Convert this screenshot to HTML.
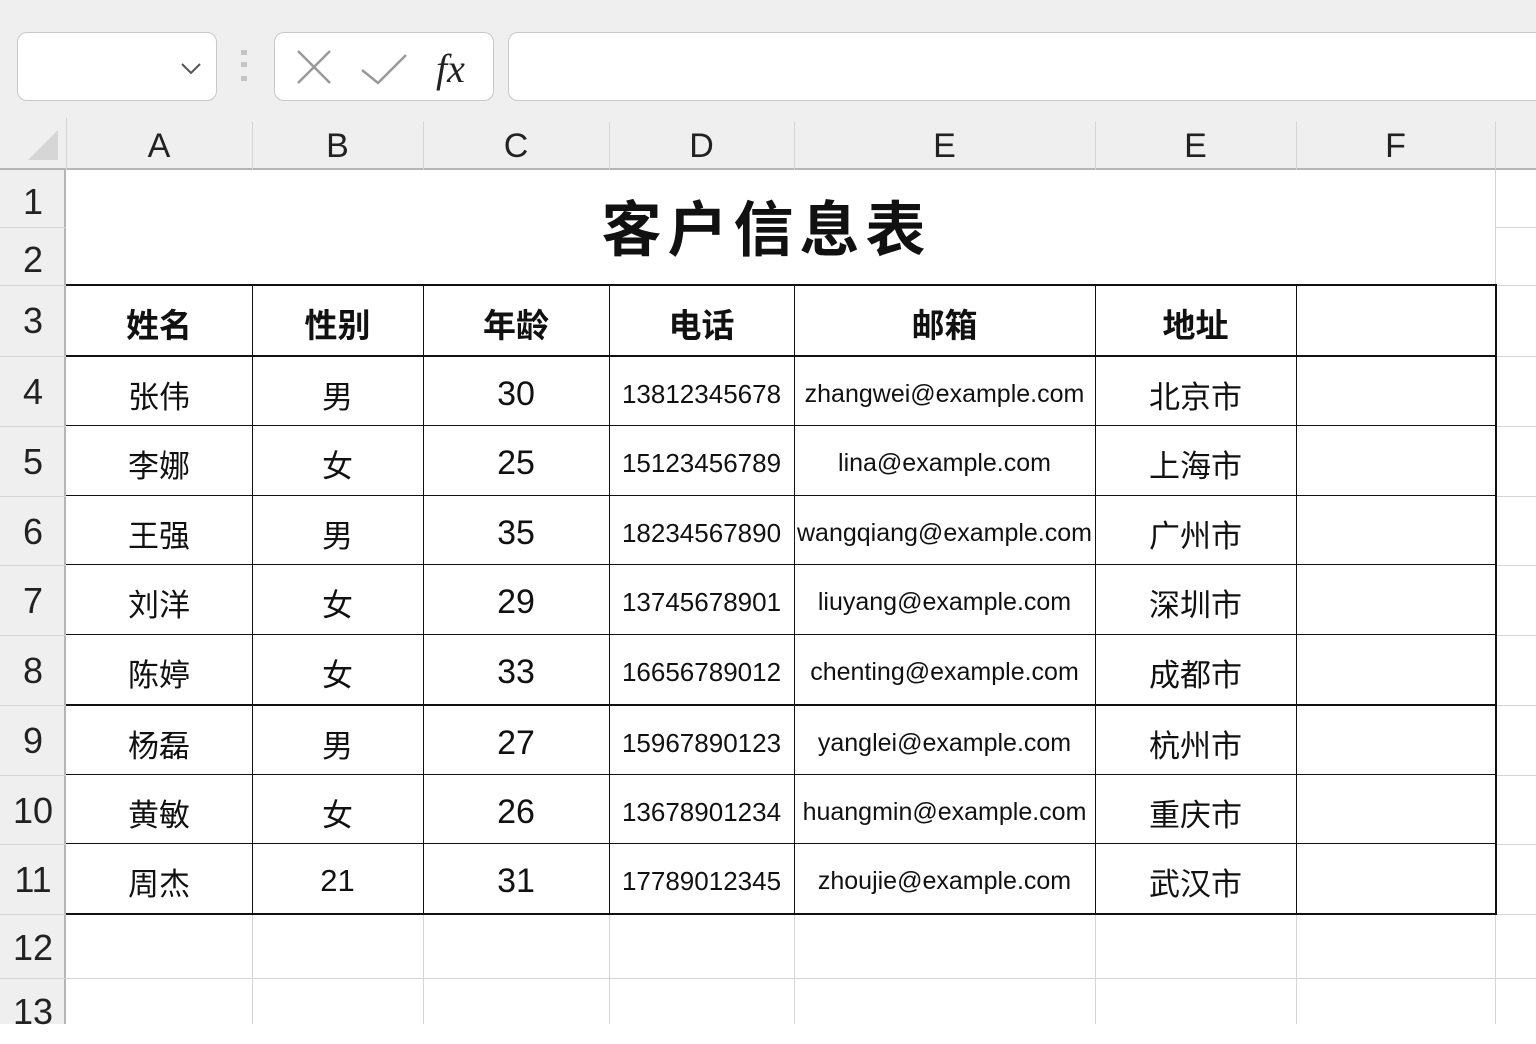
<!DOCTYPE html>
<html><head><meta charset="utf-8"><style>
*{margin:0;padding:0;box-sizing:border-box}
body{width:1536px;height:1024px;overflow:hidden;background:#fff;font-family:"Liberation Sans","Noto Sans CJK SC",sans-serif;position:relative;color:#1a1a1a}
.a{position:absolute}
.c{position:absolute;display:flex;align-items:center;justify-content:center;white-space:nowrap;overflow:hidden}
#rows .c{padding-top:5px}
.gl{position:absolute;background:#d4d4d4}
.bl{position:absolute;background:#111}
</style></head><body>
<div class="a" style="left:0;top:0;width:1536px;height:118px;background:#efefef"></div>
<div class="a" style="left:17px;top:32px;width:200px;height:69px;background:#fff;border:1.5px solid #c8c8c8;border-radius:10px"></div>
<svg class="a" style="left:178px;top:58px" width="26" height="20"><path d="M4 6 L13 15 L22 6" stroke="#555" stroke-width="2" fill="none"/></svg>
<div class="a" style="left:241px;top:50px;width:6px;height:5px;background:#c4c4c4"></div>
<div class="a" style="left:241px;top:62px;width:6px;height:5px;background:#c4c4c4"></div>
<div class="a" style="left:241px;top:76px;width:6px;height:5px;background:#c4c4c4"></div>
<div class="a" style="left:274px;top:32px;width:220px;height:69px;background:#fff;border:1.5px solid #c8c8c8;border-radius:10px"></div>
<svg class="a" style="left:290px;top:45px" width="200" height="50"><path d="M8 6 L40 38 M40 6 L8 38" stroke="#999" stroke-width="2.5"/><path d="M72 25 L88 38 L116 10" stroke="#999" stroke-width="2.5" fill="none"/>
<text x="146" y="37" font-family="Liberation Serif,serif" font-style="italic" font-size="40" fill="#222">fx</text></svg>
<div class="a" style="left:508px;top:32px;width:1040px;height:69px;background:#fff;border:1.5px solid #c8c8c8;border-radius:10px"></div>
<div class="a" style="left:0;top:118px;width:1536px;height:52px;background:#efefef;border-bottom:2px solid #b5b5b5"></div>
<svg class="a" style="left:26px;top:128px" width="34" height="34"><path d="M32 2 L32 32 L2 32 Z" fill="#d6d6d6"/></svg>
<div class="a" style="left:0;top:170px;width:66px;height:854px;background:#efefef;border-right:2px solid #b5b5b5"></div>
<div style="font-size:34px;color:#222">
<div class="c" style="left:66px;top:120px;width:186px;height:52px">A</div>
<div class="c" style="left:252px;top:120px;width:171px;height:52px">B</div>
<div class="c" style="left:423px;top:120px;width:186px;height:52px">C</div>
<div class="c" style="left:609px;top:120px;width:185px;height:52px">D</div>
<div class="c" style="left:794px;top:120px;width:301px;height:52px">E</div>
<div class="c" style="left:1095px;top:120px;width:201px;height:52px">E</div>
<div class="c" style="left:1296px;top:120px;width:199px;height:52px">F</div>
</div>
<div class="gl" style="left:252px;top:122px;width:1px;height:48px"></div>
<div class="gl" style="left:423px;top:122px;width:1px;height:48px"></div>
<div class="gl" style="left:609px;top:122px;width:1px;height:48px"></div>
<div class="gl" style="left:794px;top:122px;width:1px;height:48px"></div>
<div class="gl" style="left:1095px;top:122px;width:1px;height:48px"></div>
<div class="gl" style="left:1296px;top:122px;width:1px;height:48px"></div>
<div class="gl" style="left:1495px;top:122px;width:1px;height:48px"></div>
<div class="gl" style="left:66px;top:118px;width:1px;height:52px"></div>
<div style="font-size:36px;color:#222">
<div class="c" style="left:0;top:174px;width:66px;height:56px">1</div>
<div class="c" style="left:0;top:231px;width:66px;height:57px">2</div>
<div class="c" style="left:0;top:285px;width:66px;height:71px">3</div>
<div class="c" style="left:0;top:357px;width:66px;height:70px">4</div>
<div class="c" style="left:0;top:427px;width:66px;height:70px">5</div>
<div class="c" style="left:0;top:497px;width:66px;height:69px">6</div>
<div class="c" style="left:0;top:566px;width:66px;height:70px">7</div>
<div class="c" style="left:0;top:636px;width:66px;height:70px">8</div>
<div class="c" style="left:0;top:706px;width:66px;height:70px">9</div>
<div class="c" style="left:0;top:776px;width:66px;height:69px">10</div>
<div class="c" style="left:0;top:845px;width:66px;height:70px">11</div>
<div class="c" style="left:0;top:916px;width:66px;height:64px">12</div>
<div class="c" style="left:0;top:980px;width:66px;height:64px">13</div>
</div>
<div class="gl" style="left:0;top:227px;width:66px;height:1px"></div>
<div class="gl" style="left:0;top:285px;width:66px;height:1px"></div>
<div class="gl" style="left:0;top:356px;width:66px;height:1px"></div>
<div class="gl" style="left:0;top:426px;width:66px;height:1px"></div>
<div class="gl" style="left:0;top:496px;width:66px;height:1px"></div>
<div class="gl" style="left:0;top:565px;width:66px;height:1px"></div>
<div class="gl" style="left:0;top:635px;width:66px;height:1px"></div>
<div class="gl" style="left:0;top:705px;width:66px;height:1px"></div>
<div class="gl" style="left:0;top:775px;width:66px;height:1px"></div>
<div class="gl" style="left:0;top:844px;width:66px;height:1px"></div>
<div class="gl" style="left:0;top:914px;width:66px;height:1px"></div>
<div class="gl" style="left:0;top:978px;width:66px;height:1px"></div>
<div class="gl" style="left:1495px;top:170px;width:1px;height:854px"></div>
<div class="gl" style="left:1495px;top:227px;width:41px;height:1px"></div>
<div class="gl" style="left:1495px;top:285px;width:41px;height:1px"></div>
<div class="gl" style="left:1495px;top:356px;width:41px;height:1px"></div>
<div class="gl" style="left:1495px;top:426px;width:41px;height:1px"></div>
<div class="gl" style="left:1495px;top:496px;width:41px;height:1px"></div>
<div class="gl" style="left:1495px;top:565px;width:41px;height:1px"></div>
<div class="gl" style="left:1495px;top:635px;width:41px;height:1px"></div>
<div class="gl" style="left:1495px;top:705px;width:41px;height:1px"></div>
<div class="gl" style="left:1495px;top:775px;width:41px;height:1px"></div>
<div class="gl" style="left:1495px;top:844px;width:41px;height:1px"></div>
<div class="gl" style="left:1495px;top:914px;width:41px;height:1px"></div>
<div class="gl" style="left:66px;top:978px;width:1470px;height:1px"></div>
<div class="gl" style="left:252px;top:914px;width:1px;height:110px"></div>
<div class="gl" style="left:423px;top:914px;width:1px;height:110px"></div>
<div class="gl" style="left:609px;top:914px;width:1px;height:110px"></div>
<div class="gl" style="left:794px;top:914px;width:1px;height:110px"></div>
<div class="gl" style="left:1095px;top:914px;width:1px;height:110px"></div>
<div class="gl" style="left:1296px;top:914px;width:1px;height:110px"></div>
<div class="c" style="left:66px;top:168px;width:1395px;height:115px;font-size:60px;font-weight:bold;letter-spacing:6px;padding-left:6px;font-family:'Noto Sans CJK SC',sans-serif;color:#111">客户信息表</div>
<div class="bl" style="left:66px;top:284px;width:1431px;height:2px"></div>
<div class="bl" style="left:66px;top:355px;width:1431px;height:2px"></div>
<div class="bl" style="left:66px;top:425px;width:1431px;height:1px"></div>
<div class="bl" style="left:66px;top:495px;width:1431px;height:1px"></div>
<div class="bl" style="left:66px;top:564px;width:1431px;height:1px"></div>
<div class="bl" style="left:66px;top:634px;width:1431px;height:1px"></div>
<div class="bl" style="left:66px;top:704px;width:1431px;height:2px"></div>
<div class="bl" style="left:66px;top:774px;width:1431px;height:1px"></div>
<div class="bl" style="left:66px;top:843px;width:1431px;height:1px"></div>
<div class="bl" style="left:66px;top:913px;width:1431px;height:2px"></div>
<div class="bl" style="left:252px;top:285px;width:1px;height:629px"></div>
<div class="bl" style="left:423px;top:285px;width:1px;height:629px"></div>
<div class="bl" style="left:609px;top:285px;width:1px;height:629px"></div>
<div class="bl" style="left:794px;top:285px;width:1px;height:629px"></div>
<div class="bl" style="left:1095px;top:285px;width:1px;height:629px"></div>
<div class="bl" style="left:1296px;top:285px;width:1px;height:629px"></div>
<div class="bl" style="left:1495px;top:285px;width:2px;height:630px"></div>
<div style="font-size:33px;font-weight:bold;font-family:'Noto Sans CJK SC',sans-serif;color:#111">
<div class="c" style="left:66px;top:288px;width:186px;height:70px">姓名</div>
<div class="c" style="left:252px;top:288px;width:171px;height:70px">性别</div>
<div class="c" style="left:423px;top:288px;width:186px;height:70px">年龄</div>
<div class="c" style="left:609px;top:288px;width:185px;height:70px">电话</div>
<div class="c" style="left:794px;top:288px;width:301px;height:70px">邮箱</div>
<div class="c" style="left:1095px;top:288px;width:201px;height:70px">地址</div>
</div>
<div id="rows" style="font-family:'Liberation Sans','Noto Sans CJK SC',sans-serif;color:#111">
<div class="c" style="left:66px;top:357px;width:186px;height:69px;font-size:31px">张伟</div><div class="c" style="left:252px;top:357px;width:171px;height:69px;font-size:31px">男</div><div class="c" style="left:423px;top:357px;width:186px;height:69px;font-size:34px">30</div><div class="c" style="left:609px;top:357px;width:185px;height:69px;font-size:26px">13812345678</div><div class="c" style="left:794px;top:357px;width:301px;height:69px;font-size:25px">zhangwei@example.com</div><div class="c" style="left:1095px;top:357px;width:201px;height:69px;font-size:31px">北京市</div>
<div class="c" style="left:66px;top:426px;width:186px;height:70px;font-size:31px">李娜</div><div class="c" style="left:252px;top:426px;width:171px;height:70px;font-size:31px">女</div><div class="c" style="left:423px;top:426px;width:186px;height:70px;font-size:34px">25</div><div class="c" style="left:609px;top:426px;width:185px;height:70px;font-size:26px">15123456789</div><div class="c" style="left:794px;top:426px;width:301px;height:70px;font-size:25px">lina@example.com</div><div class="c" style="left:1095px;top:426px;width:201px;height:70px;font-size:31px">上海市</div>
<div class="c" style="left:66px;top:496px;width:186px;height:69px;font-size:31px">王强</div><div class="c" style="left:252px;top:496px;width:171px;height:69px;font-size:31px">男</div><div class="c" style="left:423px;top:496px;width:186px;height:69px;font-size:34px">35</div><div class="c" style="left:609px;top:496px;width:185px;height:69px;font-size:26px">18234567890</div><div class="c" style="left:794px;top:496px;width:301px;height:69px;font-size:25px">wangqiang@example.com</div><div class="c" style="left:1095px;top:496px;width:201px;height:69px;font-size:31px">广州市</div>
<div class="c" style="left:66px;top:565px;width:186px;height:70px;font-size:31px">刘洋</div><div class="c" style="left:252px;top:565px;width:171px;height:70px;font-size:31px">女</div><div class="c" style="left:423px;top:565px;width:186px;height:70px;font-size:34px">29</div><div class="c" style="left:609px;top:565px;width:185px;height:70px;font-size:26px">13745678901</div><div class="c" style="left:794px;top:565px;width:301px;height:70px;font-size:25px">liuyang@example.com</div><div class="c" style="left:1095px;top:565px;width:201px;height:70px;font-size:31px">深圳市</div>
<div class="c" style="left:66px;top:635px;width:186px;height:70px;font-size:31px">陈婷</div><div class="c" style="left:252px;top:635px;width:171px;height:70px;font-size:31px">女</div><div class="c" style="left:423px;top:635px;width:186px;height:70px;font-size:34px">33</div><div class="c" style="left:609px;top:635px;width:185px;height:70px;font-size:26px">16656789012</div><div class="c" style="left:794px;top:635px;width:301px;height:70px;font-size:25px">chenting@example.com</div><div class="c" style="left:1095px;top:635px;width:201px;height:70px;font-size:31px">成都市</div>
<div class="c" style="left:66px;top:706px;width:186px;height:69px;font-size:31px">杨磊</div><div class="c" style="left:252px;top:706px;width:171px;height:69px;font-size:31px">男</div><div class="c" style="left:423px;top:706px;width:186px;height:69px;font-size:34px">27</div><div class="c" style="left:609px;top:706px;width:185px;height:69px;font-size:26px">15967890123</div><div class="c" style="left:794px;top:706px;width:301px;height:69px;font-size:25px">yanglei@example.com</div><div class="c" style="left:1095px;top:706px;width:201px;height:69px;font-size:31px">杭州市</div>
<div class="c" style="left:66px;top:775px;width:186px;height:69px;font-size:31px">黄敏</div><div class="c" style="left:252px;top:775px;width:171px;height:69px;font-size:31px">女</div><div class="c" style="left:423px;top:775px;width:186px;height:69px;font-size:34px">26</div><div class="c" style="left:609px;top:775px;width:185px;height:69px;font-size:26px">13678901234</div><div class="c" style="left:794px;top:775px;width:301px;height:69px;font-size:25px">huangmin@example.com</div><div class="c" style="left:1095px;top:775px;width:201px;height:69px;font-size:31px">重庆市</div>
<div class="c" style="left:66px;top:844px;width:186px;height:69px;font-size:31px">周杰</div><div class="c" style="left:252px;top:844px;width:171px;height:69px;font-size:31px">21</div><div class="c" style="left:423px;top:844px;width:186px;height:69px;font-size:34px">31</div><div class="c" style="left:609px;top:844px;width:185px;height:69px;font-size:26px">17789012345</div><div class="c" style="left:794px;top:844px;width:301px;height:69px;font-size:25px">zhoujie@example.com</div><div class="c" style="left:1095px;top:844px;width:201px;height:69px;font-size:31px">武汉市</div>
</div>
</body></html>
